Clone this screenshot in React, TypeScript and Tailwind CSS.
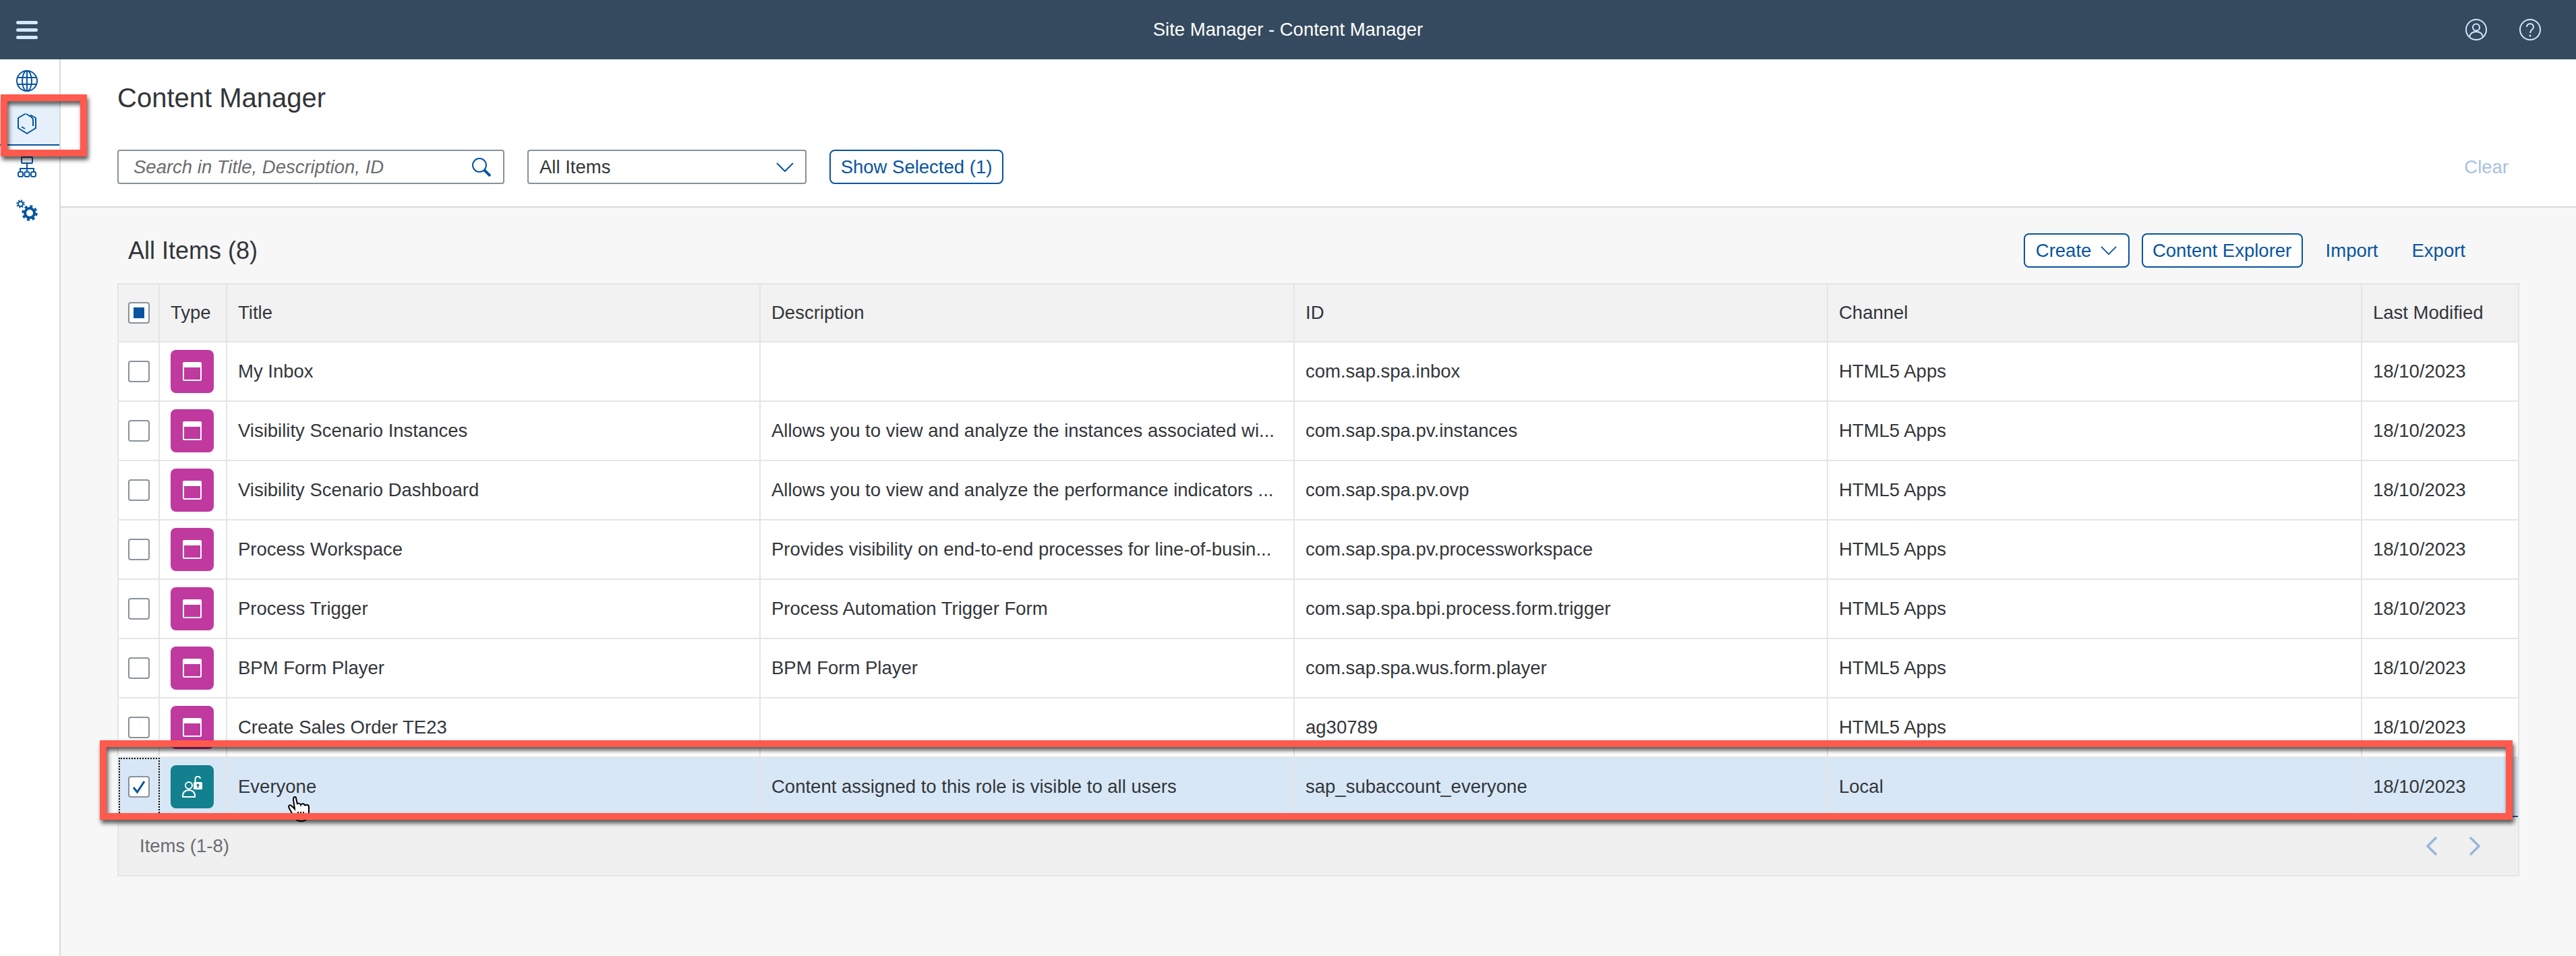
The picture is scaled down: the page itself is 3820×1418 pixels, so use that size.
import React from 'react'

const font = { fontFamily: '"Liberation Sans", Arial, sans-serif' }

const rows = [
  { title: 'My Inbox', description: '', id: 'com.sap.spa.inbox', channel: 'HTML5 Apps' },
  { title: 'Visibility Scenario Instances', description: 'Allows you to view and analyze the instances associated wi...', id: 'com.sap.spa.pv.instances', channel: 'HTML5 Apps' },
  { title: 'Visibility Scenario Dashboard', description: 'Allows you to view and analyze the performance indicators ...', id: 'com.sap.spa.pv.ovp', channel: 'HTML5 Apps' },
  { title: 'Process Workspace', description: 'Provides visibility on end-to-end processes for line-of-busin...', id: 'com.sap.spa.pv.processworkspace', channel: 'HTML5 Apps' },
  { title: 'Process Trigger', description: 'Process Automation Trigger Form', id: 'com.sap.spa.bpi.process.form.trigger', channel: 'HTML5 Apps' },
  { title: 'BPM Form Player', description: 'BPM Form Player', id: 'com.sap.spa.wus.form.player', channel: 'HTML5 Apps' },
  { title: 'Create Sales Order TE23', description: '', id: 'ag30789', channel: 'HTML5 Apps' },
  { title: 'Everyone', description: 'Content assigned to this role is visible to all users', id: 'sap_subaccount_everyone', channel: 'Local', selected: true },
]

const gridCols = 'grid grid-cols-[61px_100px_791px_792px_791px_792px_1fr]'

function Chevron({ className }: { className: string }) {
  return (
    <svg className={className} viewBox="0 0 26 14" fill="none" stroke="currentColor" strokeWidth="2">
      <path d="M1 1 L13 13 L25 1" />
    </svg>
  )
}

function Globe() {
  return (
    <svg className="w-8 h-8 text-[#0854a0]" viewBox="0 0 32 32" fill="none" stroke="currentColor" strokeWidth="2">
      <circle cx="16" cy="16" r="15" />
      <ellipse cx="16" cy="16" rx="7" ry="15" />
      <path d="M16 1V31M2 11H30M2 21H30" />
    </svg>
  )
}

function Cube() {
  return (
    <svg className="w-8 h-8 text-[#0854a0]" viewBox="0 0 32 32" fill="none" stroke="currentColor" strokeWidth="2">
      <path d="M14 1.500 L3 8 V23 L16 31 L29 23 V8 L21 3.500" />
      <path d="M15 2 L23 7 L25 10 V20" />
      <path d="M8 21 L13 24" />
    </svg>
  )
}

function Hierarchy() {
  return (
    <svg className="w-8 h-8 text-[#0854a0]" viewBox="0 0 32 32" fill="none" stroke="currentColor" strokeWidth="2">
      <rect x="8" y="1" width="16" height="9" rx="1" />
      <path d="M16 10V23M6 23V18H26V23" />
      <rect x="3" y="23" width="7" height="7" rx="2" />
      <rect x="12.500" y="23" width="7" height="7" rx="2" />
      <rect x="22" y="23" width="7" height="7" rx="2" />
    </svg>
  )
}

function Gears() {
  return (
    <svg className="w-8 h-8 text-[#0854a0]" viewBox="0 0 32 32" fill="none" stroke="currentColor">
      <circle cx="6.500" cy="6.500" r="3.500" strokeWidth="2" />
      <circle cx="6.500" cy="6.500" r="5.300" strokeWidth="2" strokeDasharray="2 2.160" />
      <circle cx="20" cy="20" r="7" strokeWidth="4" />
      <circle cx="20" cy="20" r="10" strokeWidth="3.500" strokeDasharray="4 3.850" />
    </svg>
  )
}

function AppIcon() {
  return (
    <div className="w-16 h-16 rounded-lg bg-[#c0399f] flex items-center justify-center">
      <div className="w-7 h-7 border-2 border-white rounded-[2px] border-t-[8px]" />
    </div>
  )
}

function RoleIcon() {
  return (
    <div className="w-16 h-16 rounded-lg bg-[#12808f] flex items-center justify-center">
      <svg className="w-8 h-8" viewBox="0 0 32 32" fill="none" stroke="white" strokeWidth="2">
        <circle cx="11" cy="14" r="5" />
        <path d="M2 31V29C2 24 6 21 11 21C16 21 20 24 20 29V31Z" />
        <rect x="18" y="9" width="13" height="11" rx="1.500" fill="white" stroke="none" />
        <path d="M20.500 9V5C20.500 -0.500 28 -0.500 28 4" />
        <circle cx="24.500" cy="13.500" r="2" fill="#12808f" stroke="none" />
        <rect x="23.700" y="14" width="1.600" height="4" fill="#12808f" stroke="none" />
      </svg>
    </div>
  )
}

function Checkbox({ state }: { state?: 'checked' | 'mixed' }) {
  return (
    <div className="w-8 h-8 rounded-[4px] border-2 border-[#89919a] bg-white flex items-center justify-center">
      {state === 'mixed' && <div className="w-4 h-4 bg-[#0854a0]" />}
      {state === 'checked' && (
        <svg className="w-5 h-5" viewBox="0 0 20 20" fill="none" stroke="#0854a0" strokeWidth="3">
          <path d="M2 11 L7.500 18 L18 2" />
        </svg>
      )}
    </div>
  )
}

function Cell({ children, className = '' }: { children?: React.ReactNode; className?: string }) {
  return (
    <div className={`flex items-center px-4 border-r-2 border-[#e5e5e5] whitespace-nowrap overflow-hidden ${className}`}>
      {children}
    </div>
  )
}

function Callout({ className }: { className: string }) {
  return (
    <div className={`absolute border-[10px] border-[#ff5a4d] drop-shadow-[2px_5px_3px_rgba(0,0,0,0.65)] ${className}`} />
  )
}

export default function App() {
  return (
    <div className="relative w-[3820px] h-[1418px] flex flex-col overflow-hidden bg-[#f7f7f7] text-[27.500px] text-[#32363a]" style={font}>
      <header className="h-[88px] shrink-0 bg-[#354a5f] flex items-center justify-between pl-6 pr-[52px] relative">
        <div className="w-8 flex flex-col gap-[6px]">
          <div className="h-[5px] rounded-full bg-[#d1e8ff]" />
          <div className="h-[5px] rounded-full bg-[#d1e8ff]" />
          <div className="h-[5px] rounded-full bg-[#d1e8ff]" />
        </div>
        <div className="absolute inset-x-0 text-center text-white pointer-events-none">Site Manager - Content Manager</div>
        <div className="flex items-center gap-12">
          <svg className="w-8 h-8" viewBox="0 0 32 32" fill="none" stroke="#d1e8ff" strokeWidth="2">
            <circle cx="16" cy="16" r="15" />
            <circle cx="16" cy="12.500" r="5" />
            <path d="M6 27C7 21 11 19 16 19C21 19 25 21 26 27" />
          </svg>
          <svg className="w-8 h-8" viewBox="0 0 32 32" fill="none" stroke="#d1e8ff" strokeWidth="2">
            <circle cx="16" cy="16" r="15" />
            <path d="M11 12C11 5.500 21 5.500 21 12C21 16 16 16 16 21" />
            <circle cx="16" cy="25" r="1.500" fill="#d1e8ff" stroke="none" />
          </svg>
        </div>
      </header>

      <div className="flex flex-1 min-h-0">
        <aside className="w-[90px] shrink-0 bg-white border-r-2 border-[#d9d9d9] flex flex-col">
          <div className="h-16 flex items-center justify-center pr-2"><Globe /></div>
          <div className="h-16 flex items-center justify-center pr-2 bg-[#e5f0fa] border-b-2 border-[#0854a0]"><Cube /></div>
          <div className="h-16 flex items-center justify-center pr-2"><Hierarchy /></div>
          <div className="h-16 flex items-center justify-center pr-2"><Gears /></div>
        </aside>

        <main className="flex-1 min-w-0 flex flex-col">
          <section className="h-[220px] shrink-0 bg-white border-b-2 border-[#d9d9d9] pl-[84px] pr-[100px] pt-[33px]">
            <h1 className="text-[40px] leading-[48px] font-normal">Content Manager</h1>
            <div className="flex items-center mt-[53px] h-[51px]">
              <div className="w-[574px] h-[51px] mr-[34px] flex items-center justify-between pl-[22px] pr-[18px] bg-white border-2 border-[#89919a] rounded-[4px]">
                <span className="italic text-[#6a6d70]">Search in Title, Description, ID</span>
                <svg className="w-7 h-7" viewBox="0 0 28 28" fill="none" stroke="#0854a0">
                  <circle cx="11" cy="11" r="10" strokeWidth="2" />
                  <path d="M18 18 L27 27" strokeWidth="4" />
                </svg>
              </div>
              <div className="w-[414px] h-[51px] mr-[34px] flex items-center justify-between pl-4 pr-[17px] bg-white border-2 border-[#89919a] rounded-[4px]">
                <span>All Items</span>
                <Chevron className="w-[26px] h-[14px] text-[#0854a0]" />
              </div>
              <button className="w-[258px] h-[51px] bg-white border-2 border-[#0854a0] rounded-lg text-[#0854a0] whitespace-nowrap">Show Selected (1)</button>
              <span className="ml-auto text-[#a9c2e0]">Clear</span>
            </div>
          </section>

          <section className="flex-1 px-[84px]">
            <div className="h-[112px] flex items-center justify-between pl-4 pr-[64px] pt-[15px]">
              <h2 className="text-[36px] font-normal">All Items (8)</h2>
              <div className="flex items-center gap-[18px] text-[#0854a0]">
                <button className="w-[157px] h-[51px] bg-white border-2 border-[#0854a0] rounded-lg flex items-center justify-center gap-[14px]">
                  Create
                  <Chevron className="w-[24px] h-[13px]" />
                </button>
                <button className="w-[239px] h-[51px] bg-white border-2 border-[#0854a0] rounded-lg whitespace-nowrap">Content Explorer</button>
                <button className="px-4 h-[51px]">Import</button>
                <button className="px-4 h-[51px]">Export</button>
              </div>
            </div>

            <div className="border-x-2 border-[#e5e5e5]">
              <div className={`${gridCols} h-[88px] bg-[#f2f2f2] border-y-2 border-[#e5e5e5]`}>
                <Cell className="justify-center !px-0"><Checkbox state="mixed" /></Cell>
                <Cell>Type</Cell>
                <Cell>Title</Cell>
                <Cell>Description</Cell>
                <Cell>ID</Cell>
                <Cell>Channel</Cell>
                <Cell className="!border-r-0">Last Modified</Cell>
              </div>
              {rows.map((row) => (
                <div
                  key={row.title}
                  className={`${gridCols} h-[88px] border-b-2 ${row.selected ? 'bg-[#d8e7f6] border-[#0854a0]' : 'bg-white border-[#e5e5e5]'}`}
                >
                  <Cell className={`justify-center !px-0 ${row.selected ? 'outline-2 outline-dotted outline-black -outline-offset-2' : ''}`}>
                    <Checkbox state={row.selected ? 'checked' : undefined} />
                  </Cell>
                  <Cell>{row.selected ? <RoleIcon /> : <AppIcon />}</Cell>
                  <Cell>{row.title}</Cell>
                  <Cell>{row.description}</Cell>
                  <Cell>{row.id}</Cell>
                  <Cell>{row.channel}</Cell>
                  <Cell className="!border-r-0">18/10/2023</Cell>
                </div>
              ))}
              <div className="h-[88px] bg-[#f0f0f0] border-b-2 border-[#e5e5e5] flex items-center justify-between pl-[31px] pr-[56px] text-[#6a6d70]">
                <span>Items (1-8)</span>
                <div className="flex items-center gap-12">
                  <svg className="w-4 h-7" viewBox="0 0 16 28" fill="none" stroke="#9ab6d9" strokeWidth="3.500" strokeLinecap="round"><path d="M14 2 L2 14 L14 26" /></svg>
                  <svg className="w-4 h-7" viewBox="0 0 16 28" fill="none" stroke="#9ab6d9" strokeWidth="3.500" strokeLinecap="round"><path d="M2 2 L14 14 L2 26" /></svg>
                </div>
              </div>
            </div>
          </section>
        </main>
      </div>

      {/* mouse pointer from the original capture */}
      <svg className="absolute left-[427px] top-[1180px] w-8 h-10" viewBox="0 0 32 40" fill="white" stroke="black" strokeWidth="2">
        <path d="M10 2 C8 2 8 4 8 6 L10 20 L5 15 C2 13 0 16 2 19 L9 32 C11 36 14 38 20 38 C27 38 31 33 31 26 V17 C31 13 26 13 25 15 C25 12 20 11 19 14 C18 11 14 11 14 13 L12 4 C12 3 11 2 10 2 Z" />
        <path d="M15 24V34M19 24V34M23 24V34" />
      </svg>

      {/* annotation boxes drawn on top of the screenshot */}
      <Callout className="left-[1px] top-[140px] w-[128px] h-[92px]" />
      <Callout className="left-[148px] top-[1098px] w-[3578px] h-[118px]" />
    </div>
  )
}
